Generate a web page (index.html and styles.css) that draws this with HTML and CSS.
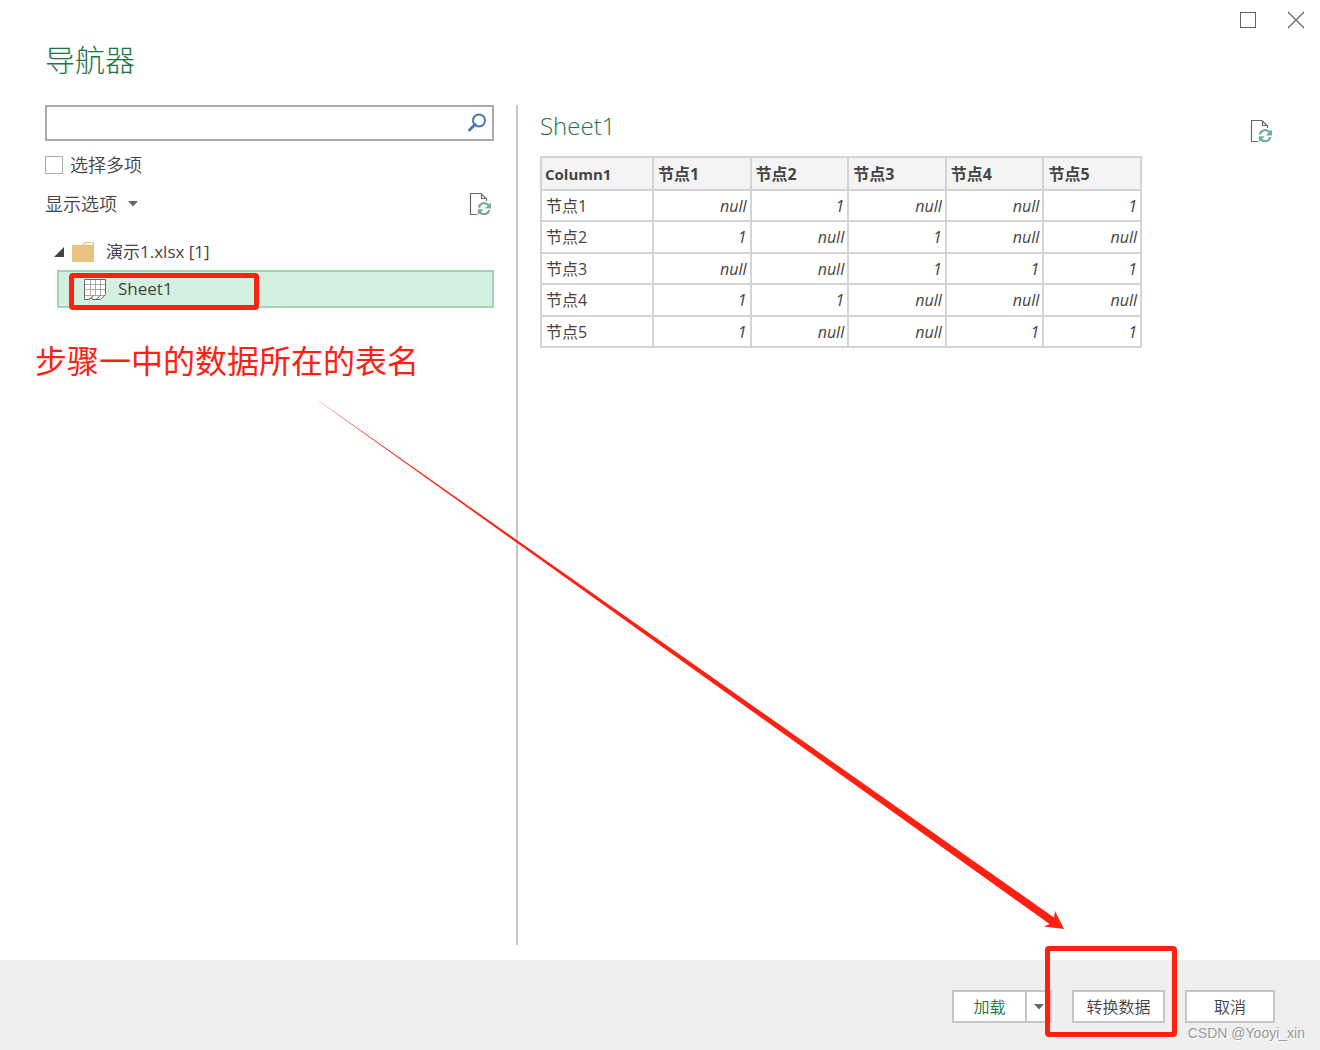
FILE: index.html
```html
<!DOCTYPE html>
<html lang="zh-CN">
<head>
<meta charset="utf-8">
<meta name="viewport" content="width=device-width, initial-scale=1">
<title>导航器</title>
<link rel="stylesheet" href="styles.css">
</head>
<body>
<svg class="symbols" aria-hidden="true">
  <symbol id="icon-refresh" viewBox="0 0 23 24">
    <path d="M8 22.500H1.500V1.500H12L17.500 7V9M12.500 1.500V6.500H17.500" fill="none" stroke="#6a6a6a" stroke-width="1.200"/>
    <path d="M9.800 15.500A5.500 5.500 0 0 1 19.500 13.200M20.300 18A5.500 5.500 0 0 1 10.800 20.300" fill="none" stroke="#76ab97" stroke-width="2.200"/>
    <path d="M22 10.500V16.500H15.800ZM8.800 23V17.300H14.800Z" fill="#76ab97"/>
  </symbol>
</svg>
<div class="dialog">
  <header class="titlebar">
    <button class="window-button" type="button" aria-label="最大化">
      <svg width="18" height="18" viewBox="0 0 18 18"><rect x="1.500" y="1.500" width="15" height="15" fill="none" stroke="#666"/></svg>
    </button>
    <button class="window-button" type="button" aria-label="关闭">
      <svg width="18" height="18" viewBox="0 0 18 18"><path d="M1 1L17 17M17 1L1 17" stroke="#666" stroke-width="1.200"/></svg>
    </button>
  </header>
  <h1 class="title">导航器</h1>

  <main class="content">
    <section class="navigator">
      <div class="search">
        <input class="search-input" type="text" aria-label="搜索">
        <button class="search-button" type="button" aria-label="搜索">
          <svg width="20" height="20" viewBox="0 0 20 20"><circle cx="12" cy="7.500" r="6" fill="none" stroke="#447ab8" stroke-width="2"/><path d="M8 11.500L2.500 17" stroke="#447ab8" stroke-width="3" stroke-linecap="round"/></svg>
        </button>
      </div>
      <label class="multi"><input class="checkbox" type="checkbox">选择多项</label>
      <div class="options">
        <button class="plain options-button" type="button">显示选项
          <svg width="10" height="6" viewBox="0 0 10 6"><path d="M0 0H10L5 5.500Z" fill="#6a6a6a"/></svg>
        </button>
        <button class="plain" type="button" aria-label="刷新">
          <svg width="23" height="24"><use href="#icon-refresh"/></svg>
        </button>
      </div>
      <div class="folder">
        <svg width="12" height="12" viewBox="0 0 12 12"><path d="M11 1V11H1Z" fill="#444"/></svg>
        <svg class="folder-icon" width="22" height="20" viewBox="0 0 22 20"><path d="M0 3H10L13 0H22V20H0Z" fill="#e9c282"/><path d="M12 2.800L14 1H21V2.800Z" fill="#fff"/></svg>
        <span>演示1.xlsx [1]</span>
      </div>
      <div class="sheet">
        <svg class="sheet-icon" width="22" height="21" viewBox="0 0 22 21"><path d="M.5.500H21.500V15L16 20.500H7L9 17.500L5.500 20.500H.5Z" fill="#fff"/><path d="M.5 5.500H21.500M.5 10.500H21.500M.5 16.500H21.500M6.500.500V16M11.500.500V16M16.500.500V16" stroke="#a8a8a8" fill="none"/><path d="M.5.500H21.500V15.500L16.500 20.500H12L16.500 16.500M.5.500V20.500H5L9.500 16.500M5 20.500L8 18.500V20.500H12" stroke="#6a6a6a" fill="none"/></svg>
        <span>Sheet1</span>
        <span class="mark mark-sheet"></span>
      </div>
      <p class="note">步骤一中的数据所在的表名</p>
    </section>

    <section class="preview">
      <div class="preview-head">
        <h2 class="preview-title">Sheet1</h2>
        <button class="plain" type="button" aria-label="刷新预览">
          <svg width="23" height="24"><use href="#icon-refresh"/></svg>
        </button>
      </div>
      <table class="grid">
        <colgroup><col class="col-name"><col span="5" class="col-node"></colgroup>
        <thead>
          <tr><th>Column1</th><th>节点1</th><th>节点2</th><th>节点3</th><th>节点4</th><th>节点5</th></tr>
        </thead>
        <tbody>
          <tr><td>节点1</td><td>null</td><td>1</td><td>null</td><td>null</td><td>1</td></tr>
          <tr><td>节点2</td><td>1</td><td>null</td><td>1</td><td>null</td><td>null</td></tr>
          <tr><td>节点3</td><td>null</td><td>null</td><td>1</td><td>1</td><td>1</td></tr>
          <tr><td>节点4</td><td>1</td><td>1</td><td>null</td><td>null</td><td>null</td></tr>
          <tr><td>节点5</td><td>1</td><td>null</td><td>null</td><td>1</td><td>1</td></tr>
        </tbody>
      </table>
    </section>
  </main>

  <footer class="footer">
    <div class="split">
      <button class="button load" type="button">加载</button>
      <button class="button load-menu" type="button" aria-label="加载选项">
        <svg width="10" height="6" viewBox="0 0 10 6"><path d="M0 0H10L5 5.500Z" fill="#6a6a6a"/></svg>
      </button>
    </div>
    <div class="marked">
      <button class="button transform" type="button">转换数据</button>
      <span class="mark mark-transform"></span>
    </div>
    <button class="button cancel" type="button">取消</button>
    <span class="watermark">CSDN @Yooyi_xin</span>
  </footer>

  <svg class="arrow" width="746" height="530" viewBox="319 401 746 530" aria-hidden="true">
    <path d="M319 401L1054 917.500L1055 911L1064 929L1044 926.500L1049.500 924L319 401.200Z" fill="#ff2012"/>
  </svg>
</div>
</body>
</html>
```
FILE: styles.css
```css
* {
  box-sizing: border-box;
}

body {
  margin: 0;
  background: #fff;
  color: #444;
  font: 18px/24px "Open Sans", "Noto Sans CJK SC", sans-serif;
}

button,
input {
  margin: 0;
  font: inherit;
  color: inherit;
}

svg {
  display: block;
  flex: none;
}

.symbols {
  position: absolute;
  width: 0;
  height: 0;
}

.dialog {
  position: relative;
  display: flex;
  flex-direction: column;
  min-height: 100vh;
}

.titlebar {
  display: flex;
  justify-content: flex-end;
  height: 40px;
}

.window-button {
  display: grid;
  place-items: center;
  width: 48px;
  padding: 0;
  border: 0;
  background: none;
}

.title {
  height: 65px;
  margin: 0;
  padding-left: 45px;
  color: #217346;
  font-size: 30px;
  font-weight: 300;
  line-height: 40px;
}

.content {
  flex: 1;
  display: flex;
  padding: 0 47px 15px 45px;
}

.navigator {
  flex: none;
  width: 449px;
  margin-right: 22px;
  font-weight: 350;
}

.search {
  display: flex;
  height: 36px;
  border: 2px solid #ababab;
}

.search-input {
  flex: 1;
  min-width: 0;
  padding: 0 8px;
  border: 0;
  background: none;
  outline: 0;
}

.search-button {
  padding: 0 5px;
  border: 0;
  background: none;
}

.multi {
  display: flex;
  align-items: center;
  gap: 7px;
  margin-top: 12px;
}

.checkbox {
  appearance: none;
  width: 18px;
  height: 18px;
  border: 1px solid #ababab;
  background: #fff;
}

.checkbox:checked {
  background: #217346;
}

.plain {
  padding: 0;
  border: 0;
  background: none;
}

.options {
  display: flex;
  align-items: center;
  justify-content: space-between;
  margin-top: 15px;
  padding-right: 2px;
}

.options-button {
  display: flex;
  align-items: center;
  gap: 11px;
}

.folder {
  display: flex;
  align-items: center;
  margin-top: 24px;
  padding-left: 8px;
  font-size: 17px;
  font-weight: 400;
}

.folder-icon {
  margin: 0 12px 0 7px;
}

.sheet {
  position: relative;
  display: flex;
  align-items: center;
  gap: 12px;
  height: 38px;
  margin: 6px 0 0 12px;
  padding-left: 25px;
  border: 2px solid #9fd5b7;
  background: #d3f0e0;
  font-size: 17px;
  font-weight: 400;
}

.mark {
  position: absolute;
  border: 5px solid #ff2012;
  border-radius: 4px;
  pointer-events: none;
}

.mark-sheet {
  top: 1px;
  left: 10px;
  width: 190px;
  height: 37px;
}

.note {
  margin: 29px 0 0 -10px;
  color: #ff2012;
  font-size: 32px;
  font-weight: 400;
  line-height: 48px;
  white-space: nowrap;
}

.preview {
  flex: 1;
  min-width: 0;
  padding-left: 22px;
  border-left: 2px solid #c6c6c6;
}

.preview-head {
  display: flex;
  align-items: center;
  justify-content: space-between;
  height: 51px;
}

.preview-title {
  margin: 0 0 10px;
  color: #217346;
  font-size: 24px;
  font-weight: 300;
  line-height: 32px;
}

.grid {
  table-layout: fixed;
  width: 602px;
  border-collapse: collapse;
  font-size: 16px;
  line-height: 20px;
}

.col-name {
  width: 112px;
}

.grid tr {
  height: 31px;
}

.grid thead tr {
  height: 33px;
}

.grid tbody tr:nth-child(even) {
  height: 32px;
}

.grid th,
.grid td {
  padding: 0 3px 0 4px;
  border: 2px solid #d4d4d4;
}

.grid th {
  background: #f4f4f4;
  text-align: left;
}

.grid th:first-child {
  padding-left: 3px;
  font-size: 15px;
}

.grid td {
  font-style: italic;
  text-align: right;
}

.grid td:first-child {
  font-style: normal;
  text-align: left;
}

.footer {
  position: relative;
  display: flex;
  justify-content: flex-end;
  gap: 20px;
  padding: 30px 45px 27px;
  background: #efefef;
}

.split {
  display: flex;
}

.button {
  height: 33px;
  padding: 0;
  border: 2px solid #c6c6c6;
  background: #fff;
  font-size: 16px;
  font-weight: 350;
  line-height: 24px;
}

.load {
  width: 75px;
  color: #217346;
}

.load-menu {
  display: grid;
  place-items: center;
  width: 27px;
  margin-left: -2px;
}

.marked {
  position: relative;
}

.transform {
  width: 93px;
}

.mark-transform {
  top: -44px;
  left: -27px;
  width: 132px;
  height: 91px;
}

.cancel {
  width: 90px;
}

.watermark {
  position: absolute;
  right: 15px;
  bottom: 8px;
  color: #999;
  font: 14px/18px "Liberation Sans", sans-serif;
  text-shadow: 1px 1px 0 #fff;
}

.arrow {
  position: absolute;
  top: 401px;
  left: 319px;
  pointer-events: none;
}
```
